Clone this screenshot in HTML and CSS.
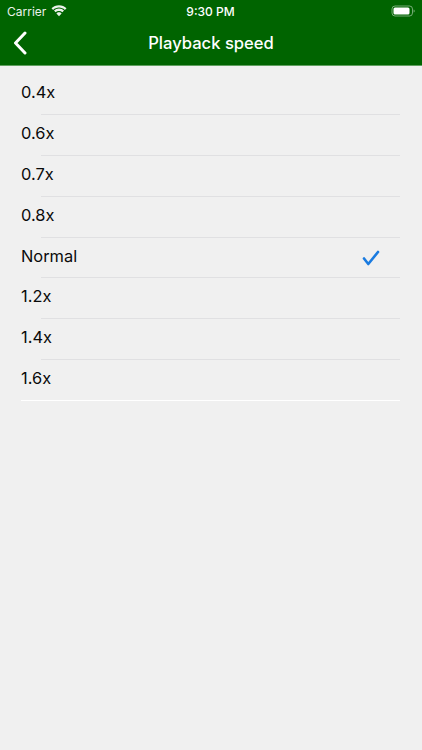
FILE: index.html
```html
<!DOCTYPE html>
<html lang="en">
<head>
<meta charset="utf-8">
<title>Playback speed</title>
<link rel="stylesheet" href="styles.css">
</head>
<body>
<header class="top">
  <div class="status">
    <div class="status-left">
      <span>Carrier</span>
      <svg class="wifi" width="16" height="12" viewBox="0 0 16 12"><path d="M8 2.600c2.300 0 4.300.9 5.900 2.300l1.600-1.700C13.500 1.300 10.900.2 8 .2S2.500 1.300.5 3.200l1.600 1.700C3.700 3.500 5.700 2.600 8 2.600z" fill="#fff"/><path d="M8 6c1.300 0 2.500.5 3.400 1.300l1.600-1.700C11.700 4.300 9.900 3.600 8 3.600s-3.700.7-5 2l1.600 1.700C5.500 6.500 6.700 6 8 6z" fill="#fff"/><path d="M8 7.300c-1 0-2 .4-2.600 1.100L8 11.200l2.600-2.800C10 7.700 9 7.300 8 7.300z" fill="#fff"/></svg>
    </div>
    <div class="status-time">9:30 PM</div>
    <div class="status-right">
      <svg width="24" height="12" viewBox="0 0 24 12"><rect x="1" y="1" width="20.500" height="10" rx="3" fill="none" stroke="#fff" stroke-opacity=".45"/><rect x="2.500" y="2.500" width="16" height="7" rx="1.500" fill="#fff"/><path d="M22.600 4.500c.7.200 1 .8 1 1.500s-.3 1.300-1 1.500z" fill="#fff" fill-opacity=".5"/></svg>
    </div>
  </div>
  <nav class="nav">
    <svg class="back" width="14" height="24" viewBox="0 0 14 24"><path d="M12 2L2.500 12 12 22" fill="none" stroke="#fff" stroke-width="3" stroke-linecap="round" stroke-linejoin="round"/></svg>
    <h1 class="title">Playback speed</h1>
  </nav>
</header>
<ul class="list">
  <li class="row"><span>0.4x</span></li>
  <li class="row"><span>0.6x</span></li>
  <li class="row"><span>0.7x</span></li>
  <li class="row"><span>0.8x</span></li>
  <li class="row"><span>Normal</span><svg class="check" width="18" height="16" viewBox="0 0 18 16"><path d="M2 8.500L6.300 14 16 2" fill="none" stroke="#1a7be0" stroke-width="2.600" stroke-linecap="round" stroke-linejoin="round"/></svg></li>
  <li class="row"><span>1.2x</span></li>
  <li class="row"><span>1.4x</span></li>
  <li class="row last"><span>1.6x</span></li>
</ul>
</body>
</html>
```
FILE: styles.css
```css
* { box-sizing: border-box; }
html, body { margin: 0; padding: 0; }
body {
  width: 422px;
  height: 750px;
  overflow: hidden;
  background: #f0f0f0;
  font-family: Inter, "Liberation Sans", sans-serif;
  color: #0a0a0a;
}
.top { background: #006400; color: #fff; height: 66px; border-bottom: 1px solid #5f9f5f; }
.status {
  height: 22px;
  display: flex;
  align-items: center;
  justify-content: space-between;
  padding: 0 7px;
  font-size: 12px;
  position: relative;
}
.status-left { display: flex; align-items: center; gap: 5px; opacity: .92; }
.wifi { margin-top: 0; }
.status-time {
  position: absolute;
  left: -1px;
  right: 0;
  text-align: center;
  font-weight: 500;
}
.status-right { display: flex; }
.nav {
  height: 43px;
  display: flex;
  align-items: center;
  justify-content: center;
  position: relative;
}
.back { position: absolute; left: 13px; top: 9px; }
.title { margin: 0 0 1px; font-size: 16.600px; font-weight: 500; }
.list { list-style: none; margin: 0; padding: 8px 22px 0 21px; }
.row {
  height: 40.900px;
  display: flex;
  align-items: center;
  justify-content: space-between;
  font-size: 16.400px;
  position: relative;
  padding-right: 20px;
  padding-bottom: 5px;
}
.row::after {
  content: "";
  position: absolute;
  left: 20px;
  right: 0;
  bottom: 0;
  height: 1px;
  background: #e0e0e2;
}
.row.last::after { left: 0; background: #fff; height: 1.500px; }
.check { margin-top: 5px; }
```
